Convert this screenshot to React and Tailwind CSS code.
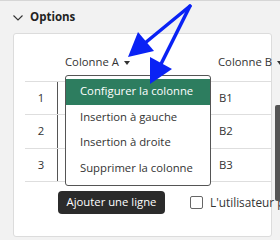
export default function App() {
  const rows = ["1", "2", "3"];
  const menu = [
    "Configurer la colonne",
    "Insertion à gauche",
    "Insertion à droite",
    "Supprimer la colonne",
  ];

  return (
    <div className="relative w-[280px] h-[240px] overflow-hidden bg-[#f2f2f2] border-t border-[#d6d6d6] font-['Open_Sans',sans-serif] text-[#333]">
      {/* Section header */}
      <div className="flex items-center h-[32px] pl-[13px] gap-[7px]">
        <svg width="10" height="6" viewBox="0 0 10 6" className="mt-[1px]">
          <polyline points="0.5,0.5 5,5 9.5,0.5" fill="none" stroke="#333" strokeWidth="1.1" />
        </svg>
        <span className="text-[11.5px] font-bold text-[#222]">Options</span>
      </div>

      {/* Card */}
      <div className="relative ml-[13px] w-[259px] h-[204px] bg-white border border-[#dcdcdc] rounded-[3px]">
        <div className="pl-[11px]">
          {/* Header row */}
          <div className="flex items-end h-[48px] pb-[10px] border-b border-[#dedede] text-[11.3px] whitespace-nowrap">
            <div className="w-[33px] shrink-0" />
            <div className="w-[152px] shrink-0 pl-[7px] flex items-center gap-[5px]">
              Colonne A
              <span className="inline-block w-0 h-0 border-l-[3.5px] border-r-[3.5px] border-t-[4px] border-l-transparent border-r-transparent border-t-[#333] mt-[1px]" />
            </div>
            <div className="pl-[8px] flex items-center gap-[5px]">
              Colonne B
              <span className="inline-block w-0 h-0 border-l-[3.5px] border-r-[3.5px] border-t-[4px] border-l-transparent border-r-transparent border-t-[#333] mt-[1px]" />
            </div>
          </div>

          {/* Body rows */}
          {rows.map((r, i) => (
            <div key={r} className={`flex border-b border-[#dedede] text-[11.3px] ${i === 1 ? "h-[34px]" : "h-[33px]"}`}>
              <div className="w-[33px] shrink-0 flex items-center justify-center border-r border-[#555]">{r}</div>
              <div className="w-[152px] shrink-0 border-r border-[#dedede]" />
              <div className="flex-1 flex items-center pl-[9px]">B{r}</div>
            </div>
          ))}
        </div>

        {/* Footer actions */}
        <div className="flex items-center mt-[9px] pl-[44px] whitespace-nowrap">
          <button className="shrink-0 w-[107px] h-[23px] rounded-[4px] bg-[#2b2b2b] text-white text-[11.3px]">
            Ajouter une ligne
          </button>
          <span className="shrink-0 block ml-[25px] w-[13px] h-[13px] border border-[#666] rounded-[2px] bg-white" />
          <span className="ml-[7px] text-[11.8px]">L'utilisateur p</span>
        </div>

        {/* Dropdown menu */}
        <div className="absolute left-[51px] top-[41px] w-[146px] h-[111px] bg-white border border-[#555] rounded-[3px] pt-[3px] text-[11.3px]">
          {menu.map((m, i) => (
            <div
              key={m}
              className={`h-[25.5px] flex items-center pl-[14px] ${i === 0 ? "bg-[#2d7d5f] text-white" : "text-[#333]"}`}
            >
              {m}
            </div>
          ))}
        </div>
      </div>

      {/* Scrollbar thumb */}
      <div className="absolute right-0 top-[104px] w-[5px] h-[96px] rounded-l-[2px] bg-[#555]" />

      {/* Annotation arrows */}
      <svg className="absolute left-0 top-0" width="280" height="240" viewBox="0 0 280 240">
        <line x1="190" y1="5" x2="145" y2="42" stroke="#0a22f5" strokeWidth="3.5" strokeLinecap="round" />
        <polygon points="128,56 138,31 154,50" fill="#0a22f5" />
        <line x1="190" y1="5" x2="161" y2="63" stroke="#0a22f5" strokeWidth="3.5" strokeLinecap="round" />
        <polygon points="150,83 150,56 172,68" fill="#0a22f5" />
      </svg>
    </div>
  );
}
